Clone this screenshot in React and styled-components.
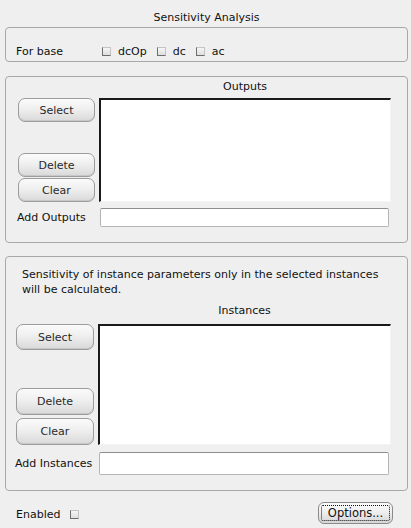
import React from "react";
import styled, { createGlobalStyle } from "styled-components";

const Global = createGlobalStyle`
  html, body { margin: 0; padding: 0; background: #efefef; }
  body { font-family: "DejaVu Sans", Verdana, sans-serif; font-size: 11px; color: #111; }
  * { box-sizing: border-box; }
`;

const Page = styled.div`
  width: 411px;
  height: 528px;
  padding: 0 3px 0 5px;
  display: flex;
  flex-direction: column;
  background: #efefef;
`;

const Title = styled.div`
  height: 27px;
  padding-top: 11px;
  line-height: 14px;
  text-align: center;
`;

const Group = styled.div`
  border: 1px solid #a8a8a8;
  border-radius: 4px;
  margin-top: ${(p) => p.$mt || 0}px;
  padding: ${(p) => p.$pad};
`;

const BaseRow = styled.div`
  display: flex;
  align-items: center;
  height: 14px;
`;

const Label = styled.span`
  width: ${(p) => p.$w || "auto"};
  white-space: nowrap;
`;

const Check = styled.span`
  display: inline-block;
  width: 9px;
  height: 9px;
  margin-right: ${(p) => p.$mr ?? 7}px;
  background: linear-gradient(#f6f6f6, #dedede);
  border: 1px solid #c4c4c4;
  border-left-color: #6e6e6e;
  border-bottom-color: #6e6e6e;
`;

const CheckItem = styled.span`
  display: inline-flex;
  align-items: center;
  margin-right: ${(p) => p.$mr}px;
`;

const Grid = styled.div`
  display: grid;
  grid-template-columns: ${(p) => p.$cols};
  column-gap: ${(p) => p.$gap}px;
  grid-template-rows: auto ${(p) => p.$listH}px auto;
`;

const Header = styled.div`
  grid-column: 2;
  text-align: center;
  line-height: 14px;
  margin-bottom: ${(p) => p.$mb}px;
`;

const ButtonCol = styled.div`
  grid-column: 1;
  display: flex;
  flex-direction: column;
  gap: ${(p) => p.$gap}px;
`;

const Button = styled.div`
  height: ${(p) => p.$h}px;
  margin-top: ${(p) => (p.$push ? "auto" : "0")};
  border: 1px solid #9c9c9c;
  border-radius: 7px;
  background: linear-gradient(#fbfbfb 0%, #efefef 45%, #d9d9d9 100%);
  box-shadow: inset 0 -1px 0 #c8c8c8;
  display: flex;
  align-items: center;
  justify-content: center;
  color: #2a2a2a;
`;

const List = styled.div`
  grid-column: 2;
  background: #fff;
  border-top: 2px solid #1a1a1a;
  border-left: 2px solid #1a1a1a;
  border-right: 1px solid #f4f4f4;
  border-bottom: 1px solid #f4f4f4;
`;

const InputLabel = styled.div`
  grid-column: 1;
  display: flex;
  align-items: center;
  margin-left: ${(p) => p.$ml}px;
  white-space: nowrap;
  margin-top: ${(p) => p.$mt}px;
`;

const Input = styled.div`
  grid-column: 2;
  height: ${(p) => p.$h}px;
  margin-top: ${(p) => p.$mt}px;
  margin-left: 1px;
  margin-right: 2px;
  background: #fff;
  border: 1px solid #b4b4b4;
  border-top-color: #8e8e8e;
  border-radius: 2px;
`;

const Note = styled.div`
  line-height: 15px;
  margin-left: 6px;
  margin-bottom: 7px;
`;

const Footer = styled.div`
  display: flex;
  align-items: center;
  justify-content: space-between;
  margin-top: 11px;
  padding-left: 11px;
  padding-right: 15px;
`;

const EnabledBox = styled.div`
  display: flex;
  align-items: center;
  gap: 10px;
  margin-top: 2px;
`;

const OptionsButton = styled.div`
  width: 75px;
  height: 22px;
  border: 1px solid #8a8a8a;
  border-radius: 6px;
  background: linear-gradient(#fbfbfb 0%, #efefef 45%, #d6d6d6 100%);
  padding: 2px;
`;

const Focus = styled.div`
  height: 100%;
  border: 1px dotted #111;
  border-radius: 2px;
  display: flex;
  align-items: center;
  justify-content: center;
  color: #111;
  font-size: 11.5px;
`;

export default function App() {
  return (
    <>
      <Global />
      <Page>
        <Title>Sensitivity Analysis</Title>
        <Group $pad="16px 0 3px 10px">
          <BaseRow>
            <Label $w="86px">For base</Label>
            <CheckItem $mr={10}>
              <Check />dcOp
            </CheckItem>
            <CheckItem $mr={10}>
              <Check />dc
            </CheckItem>
            <CheckItem $mr={0}>
              <Check />ac
            </CheckItem>
          </BaseRow>
        </Group>

        <Group $mt={14} $pad="3px 16px 15px 12px">
          <Grid $cols="77px 292px" $gap={4} $listH={104}>
            <Header $mb={4}>Outputs</Header>
            <ButtonCol $gap={1}>
              <Button $h={24}>Select</Button>
              <Button $h={24} $push>Delete</Button>
              <Button $h={24}>Clear</Button>
            </ButtonCol>
            <List />
            <InputLabel $ml={-1} $mt={6}>Add Outputs</InputLabel>
            <Input $h={19} $mt={6} />
          </Grid>
        </Group>

        <Group $mt={13} $pad="10px 16px 15px 10px">
          <Note>
            Sensitivity of instance parameters only in the selected instances
            <br />
            will be calculated.
          </Note>
          <Grid $cols="78px 293px" $gap={4} $listH={121}>
            <Header $mb={6}>Instances</Header>
            <ButtonCol $gap={3}>
              <Button $h={26}>Select</Button>
              <Button $h={27} $push>Delete</Button>
              <Button $h={27}>Clear</Button>
            </ButtonCol>
            <List />
            <InputLabel $ml={-1} $mt={7}>Add Instances</InputLabel>
            <Input $h={23} $mt={7} />
          </Grid>
        </Group>

        <Footer>
          <EnabledBox>
            <span>Enabled</span>
            <Check $mr={0} />
          </EnabledBox>
          <OptionsButton>
            <Focus>Options...</Focus>
          </OptionsButton>
        </Footer>
      </Page>
    </>
  );
}
